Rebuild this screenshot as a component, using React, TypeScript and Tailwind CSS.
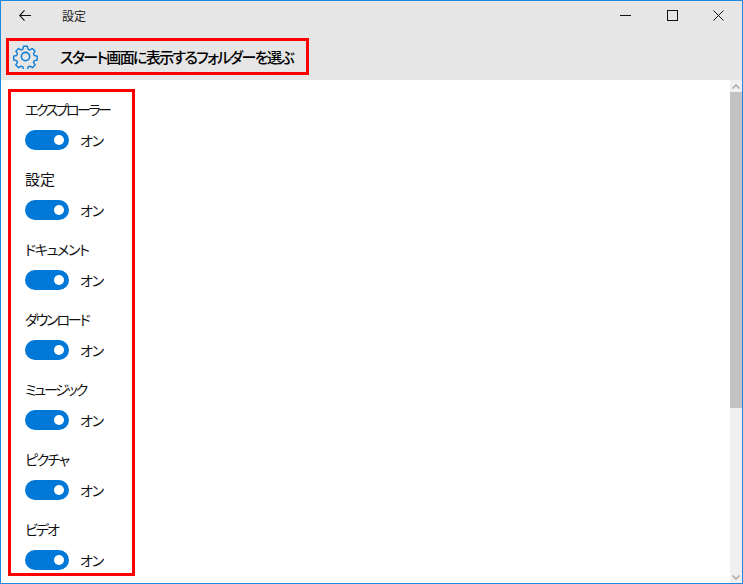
import React from "react";

const items = [
  { label: "エクスプローラー", cls: "tracking-[-2.5px] text-[14px]" },
  { label: "設定", cls: "text-[15px]" },
  { label: "ドキュメント", cls: "tracking-[-1.3px] text-[14px]" },
  { label: "ダウンロード", cls: "tracking-[-2.15px] text-[14px]" },
  { label: "ミュージック", cls: "tracking-[-2.2px] text-[14px]" },
  { label: "ピクチャ", cls: "tracking-[-1.5px] text-[14px]" },
  { label: "ビデオ", cls: "tracking-[-2px] text-[14px]" },
];

function Gear() {
  return (
    <svg width="25" height="25" viewBox="0 0 26 26" fill="none" stroke="#0f7fd6" strokeWidth="1.6" strokeLinejoin="round">
      <path d="M10.8 1.5h4.4l.7 3.3 2 .9 2.9-1.8 3.1 3.1-1.8 2.9.9 2 3.3.7v4.4l-3.3.7-.9 2 1.8 2.9-3.1 3.1-2.9-1.8-2 .9-.7 3.3h-4.4l-.7-3.3-2-.9-2.9 1.8-3.1-3.1 1.8-2.9-.9-2-3.3-.7v-4.4l3.3-.7.9-2-1.8-2.9 3.1-3.1 2.9 1.8 2-.9z" transform="translate(1 1) scale(0.92)" />
      <circle cx="13" cy="13" r="4.3" />
    </svg>
  );
}

function Row({ label, cls }: { label: string; cls: string }) {
  return (
    <div className="h-[70px] pl-[14px]">
      <div className={`h-[38px] whitespace-nowrap pt-[5px] leading-[24px] text-[#111] ${cls}`}>{label}</div>
      <div className="flex h-[20px] items-center gap-[11px]">
        <div className="flex h-[20px] w-[44px] items-center justify-end rounded-full bg-[#0078d7] pr-[5px]">
          <div className="h-[10px] w-[10px] rounded-full bg-white" />
        </div>
        <span className="text-[14px] leading-[20px] tracking-[-1px] text-[#111]">オン</span>
      </div>
    </div>
  );
}

export default function App() {
  return (
    <div
      className="flex h-[584px] w-[743px] flex-col overflow-hidden border border-[#1d8ae0] bg-white [font-feature-settings:'palt'] font-['Noto_Sans_CJK_JP','Noto_Sans',sans-serif]"
    >
      <div className="flex h-[29px] shrink-0 items-center bg-[#e6e6e6]">
        <svg className="ml-[18px]" width="12" height="11" viewBox="0 0 12 11" fill="none" stroke="#111" strokeWidth="1.1">
          <path d="M0.5 5.5H12M5.5 0.4L0.7 5.5L5.5 10.6" />
        </svg>
        <span className="ml-[31px] text-[12px] leading-[14px] text-[#222]">設定</span>
        <div className="ml-auto flex items-center">
          <svg width="11" height="11" viewBox="0 0 11 11" stroke="#111" strokeWidth="1"><path d="M0 5.5H11" /></svg>
          <svg className="ml-[36px]" width="11" height="11" viewBox="0 0 11 11" fill="none" stroke="#111" strokeWidth="1"><rect x="0.5" y="0.5" width="10" height="10" /></svg>
          <svg className="ml-[35px] mr-[18px]" width="11" height="11" viewBox="0 0 11 11" stroke="#111" strokeWidth="1"><path d="M0.5 0.5L10.5 10.5M10.5 0.5L0.5 10.5" /></svg>
        </div>
      </div>
      <div className="h-[50px] shrink-0 bg-[#e6e6e6] pl-[5px] pt-[8px]">
        <div className="flex h-[37px] w-[303px] items-center border-[3px] border-[#ff0000] pl-[4px]">
          <Gear />
          <span className="ml-[22px] whitespace-nowrap text-[15px] font-medium leading-[20px] tracking-[-1.65px] text-black">スタート画面に表示するフォルダーを選ぶ</span>
        </div>
      </div>
      <div className="flex min-h-0 flex-1">
        <div className="min-w-0 flex-1 pl-[7px] pt-[9px]">
          <div className="h-[487px] w-[127px] overflow-hidden border-[3px] border-[#ff0000]">
            {items.map((t) => (
              <Row key={t.label} label={t.label} cls={t.cls} />
            ))}
          </div>
        </div>
        <div className="flex w-[12px] shrink-0 flex-col bg-[#f0f0f0]">
          <div className="flex h-[12px] items-center justify-center">
            <svg width="8" height="5" viewBox="0 0 8 5" fill="none" stroke="#a6a6a6" strokeWidth="1.4"><path d="M0.5 4.5L4 1L7.5 4.5" /></svg>
          </div>
          <div className="h-[316px] bg-[#c2c2c2]" />
          <div className="mt-auto flex h-[12px] items-center justify-center">
            <svg width="8" height="5" viewBox="0 0 8 5" fill="none" stroke="#a6a6a6" strokeWidth="1.4"><path d="M0.5 0.5L4 4L7.5 0.5" /></svg>
          </div>
        </div>
      </div>
    </div>
  );
}
